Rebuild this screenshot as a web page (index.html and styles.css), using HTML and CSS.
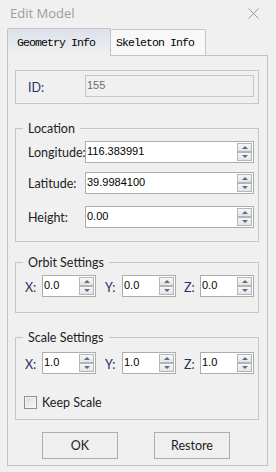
FILE: index.html
```html
<!DOCTYPE html>
<html>
<head>
<meta charset="utf-8">
<title>Edit Model</title>
<link rel="stylesheet" href="styles.css">
</head>
<body>
<div class="window">
  <div class="titlebar">
    <span class="title">Edit Model</span>
    <svg class="close" width="11" height="11" viewBox="0 0 11 11"><path d="M0.5 0.5 L10.5 10.5 M10.5 0.5 L0.5 10.5" stroke="#9a9a9a" stroke-width="1" fill="none"/></svg>
  </div>
  <div class="tabs">
    <div class="tab active">Geometry Info</div>
    <div class="tab">Skeleton Info</div>
  </div>
  <div class="panel">
    <div class="idgroup">
      <span class="label navy">ID:</span>
      <div class="field disabled">155</div>
    </div>

    <fieldset class="group location">
      <legend>Location</legend>
      <div class="row">
        <span class="label">Longitude:</span>
        <div class="spin wide"><span class="val">116.383991</span><span class="btns"><span class="up"></span><span class="down"></span></span></div>
      </div>
      <div class="row lat">
        <span class="label">Latitude:</span>
        <div class="spin wide"><span class="val">39.9984100</span><span class="btns"><span class="up"></span><span class="down"></span></span></div>
      </div>
      <div class="row hgt">
        <span class="label">Height:</span>
        <div class="spin wide"><span class="val">0.00</span><span class="btns"><span class="up"></span><span class="down"></span></span></div>
      </div>
    </fieldset>

    <fieldset class="group orbit">
      <legend>Orbit Settings</legend>
      <div class="xyz">
        <span class="axis navy">X:</span>
        <div class="spin small"><span class="val">0.0</span><span class="btns"><span class="up"></span><span class="down"></span></span></div>
        <span class="axis navy ay">Y:</span>
        <div class="spin small"><span class="val">0.0</span><span class="btns"><span class="up"></span><span class="down"></span></span></div>
        <span class="axis navy az">Z:</span>
        <div class="spin small"><span class="val">0.0</span><span class="btns"><span class="up"></span><span class="down"></span></span></div>
      </div>
    </fieldset>

    <fieldset class="group scale">
      <legend>Scale Settings</legend>
      <div class="xyz">
        <span class="axis navy">X:</span>
        <div class="spin small"><span class="val">1.0</span><span class="btns"><span class="up"></span><span class="down"></span></span></div>
        <span class="axis navy ay">Y:</span>
        <div class="spin small"><span class="val">1.0</span><span class="btns"><span class="up"></span><span class="down"></span></span></div>
        <span class="axis navy az">Z:</span>
        <div class="spin small"><span class="val">1.0</span><span class="btns"><span class="up"></span><span class="down"></span></span></div>
      </div>
      <label class="check"><span class="box"></span><span>Keep Scale</span></label>
    </fieldset>

    <div class="buttons">
      <button class="btn">OK</button>
      <button class="btn">Restore</button>
    </div>
  </div>
</div>
</body>
</html>
```

FILE: styles.css
```css
html, body {
  margin: 0;
  padding: 0;
}
body {
  background: #f0f0f0;
  width: 276px;
  height: 472px;
  overflow: hidden;
  font-family: Lato, "Open Sans", sans-serif;
  font-size: 12.5px;
  color: #222;
}
.window {
  width: 276px;
  height: 472px;
}
.titlebar {
  height: 28px;
  box-sizing: border-box;
  display: flex;
  justify-content: space-between;
  align-items: flex-start;
  padding: 4px 17px 0 10px;
}
.title {
  font-family: "Open Sans", sans-serif;
  font-size: 13px;
  line-height: 18px;
  color: #9c9c9c;
}
.close {
  margin-top: 4px;
  display: block;
}
.tabs {
  display: flex;
  align-items: flex-start;
  height: 27px;
  margin-left: 7px;
}
.tab {
  box-sizing: border-box;
  height: 27px;
  border: 1px solid #c3c3c3;
  border-bottom: none;
  border-radius: 2px 2px 0 0;
  font-family: "Liberation Mono", monospace;
  font-size: 11.5px;
  letter-spacing: -0.9px;
  color: #000;
  display: flex;
  align-items: center;
  background: #f8f8f8;
}
.tab.active {
  width: 104px;
  height: 28px;
  padding: 0 0 1px 9px;
  background: linear-gradient(#dbe2ea, #f0f0f0);
  position: relative;
  z-index: 1;
}
.tab:not(.active) {
  width: 95px;
  border-left: none;
  padding-left: 5px;
  margin-top: 1px;
  height: 26px;
}
.panel {
  box-sizing: border-box;
  margin-left: 7px;
  width: 261px;
  height: 411px;
  border: 1px solid #c3c3c3;
  padding: 14px 8px 0 7px;
  display: flex;
  flex-direction: column;
}
.label {
  width: 57px;
  flex: none;
}
.navy {
  color: #27325a;
}
.idgroup {
  box-sizing: border-box;
  width: 244px;
  height: 34px;
  border: 1px solid #c6c6c6;
  display: flex;
  align-items: center;
  padding: 0 0 2px 12px;
}
.idgroup .label {
  padding-top: 3px;
}
.field {
  box-sizing: border-box;
  width: 169px;
  height: 22px;
  border: 1px solid #c6c6c6;
  padding: 0 0 0 1px;
  font-family: "Liberation Sans", sans-serif;
  font-size: 11px;
  line-height: 19px;
}
.field.disabled {
  background: #f0f0f0;
  color: #6d6d6d;
}
fieldset.group {
  margin: 0;
  min-width: 0;
  width: 244px;
  box-sizing: border-box;
  border: 1px solid #c6c6c6;
}
fieldset.group legend {
  margin-left: 7px;
  padding: 0 5px;
  line-height: 15px;
  font-size: 12.5px;
  color: #222;
}
fieldset.location {
  margin-top: 17px;
  padding: 5px 0 13px 0;
}
fieldset.location .row {
  margin-left: 12px;
}
fieldset.orbit {
  margin-top: 13px;
  padding: 5px 0 15px 0;
}
fieldset.scale {
  margin-top: 17px;
  padding: 7px 0 10px 0;
}
fieldset.orbit .xyz,
fieldset.scale .xyz {
  margin-left: 9px;
}
.row {
  display: flex;
  align-items: center;
  height: 22px;
}
.row.lat {
  margin-top: 9px;
}
.row.hgt {
  margin-top: 12px;
}
.row .label {
  padding-top: 1px;
}
.spin {
  box-sizing: border-box;
  height: 22px;
  border: 1px solid #acacac;
  background: #fff;
  padding: 1px;
  display: flex;
  justify-content: space-between;
  flex: none;
}
.spin.wide {
  width: 169px;
}
.spin.small {
  width: 54px;
}
.val {
  font-family: "Liberation Sans", sans-serif;
  font-size: 11px;
  line-height: 16px;
  color: #000;
}
.btns {
  display: flex;
  flex-direction: column;
  width: 15px;
}
.btns span {
  box-sizing: border-box;
  height: 9px;
  border: 1px solid #b5b5b5;
  background: linear-gradient(#f7f7f7, #e4e4e4);
  display: flex;
  align-items: center;
  justify-content: center;
}
.btns .up::after {
  content: "";
  width: 0;
  height: 0;
  border-left: 3px solid transparent;
  border-right: 3px solid transparent;
  border-bottom: 3px solid #566c98;
}
.btns .down::after {
  content: "";
  width: 0;
  height: 0;
  border-left: 3px solid transparent;
  border-right: 3px solid transparent;
  border-top: 3px solid #566c98;
}
.xyz {
  display: flex;
  align-items: center;
  height: 22px;
}
.axis {
  width: 17px;
  flex: none;
  padding-top: 2px;
}
.axis.ay {
  margin-left: 9px;
}
.axis.az {
  margin-left: 8px;
  width: 16px;
}
.check {
  display: flex;
  align-items: center;
  height: 13px;
  margin: 22px 0 0 8px;
  gap: 5px;
}
.box {
  box-sizing: border-box;
  width: 13px;
  height: 13px;
  border: 1px solid #8f8f8f;
  background: linear-gradient(135deg, #dcdcdc, #f8f8f8);
  box-shadow: inset 0 0 0 1px #f4f4f4;
}
.buttons {
  display: flex;
  gap: 36px;
  margin: 12px 0 0 27px;
}
.btn {
  box-sizing: border-box;
  width: 76px;
  height: 27px;
  border: 1px solid #adadad;
  background: #efefef;
  font-family: Lato, "Open Sans", sans-serif;
  font-size: 12.5px;
  color: #222;
  padding: 0;
  margin: 0;
}
```
